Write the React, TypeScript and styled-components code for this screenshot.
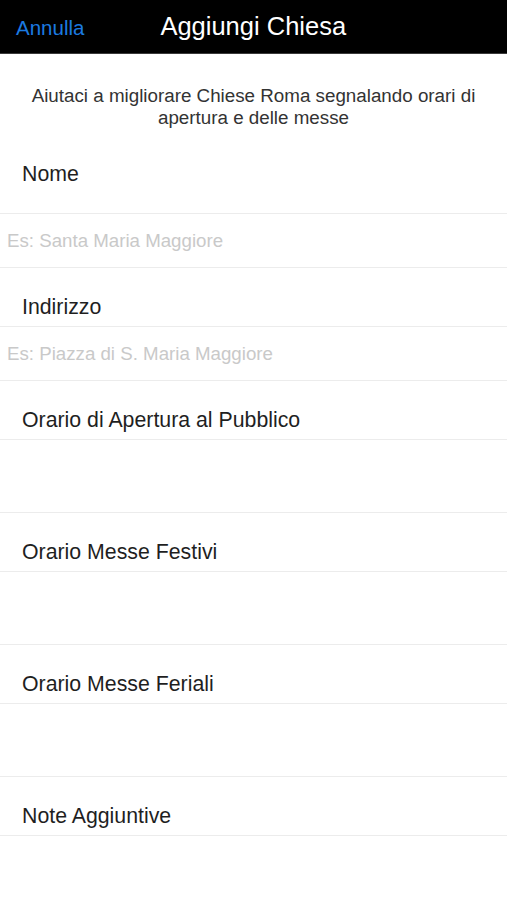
import React from 'react';
import styled, { createGlobalStyle } from 'styled-components';

const GlobalStyle = createGlobalStyle`
  html, body {
    margin: 0;
    padding: 0;
    background: #ffffff;
    font-family: "Liberation Sans", Arial, sans-serif;
  }
`;

const Page = styled.div`
  width: 507px;
  min-height: 900px;
  background: #ffffff;
  overflow: hidden;
`;

const NavBar = styled.div`
  height: 53px;
  background: #000000;
  border-bottom: 1px solid #3a3a3a;
  display: flex;
  align-items: center;
`;

const CancelButton = styled.button`
  background: none;
  border: none;
  padding: 0 0 0 16px;
  margin: 2px 0 0;
  color: #1b7ae0;
  font-family: "Liberation Sans", Arial, sans-serif;
  font-size: 20.5px;
  cursor: pointer;
`;

const Title = styled.h1`
  margin: 0 0 0 76px;
  color: #ffffff;
  font-weight: normal;
  font-size: 25.5px;
  font-family: "Liberation Sans", Arial, sans-serif;
`;

const Intro = styled.p`
  margin: 0;
  padding: 31px 10px 0;
  height: 70px;
  text-align: center;
  color: #333333;
  font-size: 18.8px;
  line-height: 22px;
`;

const LabelRow = styled.div<{ $first?: boolean }>`
  padding: ${p => (p.$first ? '7px 22px 27px' : '27px 22px 7px')};
  line-height: 24px;
  font-size: 21.3px;
  color: #1f1f1f;
  border-bottom: 1px solid #ececec;
`;

const TextInput = styled.input`
  display: block;
  width: 100%;
  box-sizing: border-box;
  height: 54px;
  border: none;
  border-bottom: 1px solid #ececec;
  padding: 0 7px;
  font-family: "Liberation Sans", Arial, sans-serif;
  font-size: 18.7px;
  color: #222;
  outline: none;
  background: #fff;

  &::placeholder {
    color: #c9c9c9;
  }
`;

const TextArea = styled.textarea<{ $last?: boolean }>`
  display: block;
  width: 100%;
  box-sizing: border-box;
  height: ${p => (p.$last ? '65px' : '73px')};
  border: none;
  border-bottom: ${p => (p.$last ? 'none' : '1px solid #ececec')};
  padding: 8px 7px;
  resize: none;
  font-family: "Liberation Sans", Arial, sans-serif;
  font-size: 18px;
  outline: none;
  background: #fff;
`;

const fields = [
  { label: 'Nome', kind: 'input', placeholder: 'Es: Santa Maria Maggiore' },
  { label: 'Indirizzo', kind: 'input', placeholder: 'Es: Piazza di S. Maria Maggiore' },
  { label: 'Orario di Apertura al Pubblico', kind: 'area' },
  { label: 'Orario Messe Festivi', kind: 'area' },
  { label: 'Orario Messe Feriali', kind: 'area' },
  { label: 'Note Aggiuntive', kind: 'area' },
];

export default function App() {
  return (
    <Page>
      <GlobalStyle />
      <NavBar>
        <CancelButton>Annulla</CancelButton>
        <Title>Aggiungi Chiesa</Title>
      </NavBar>
      <Intro>
        Aiutaci a migliorare Chiese Roma segnalando orari di
        <br />
        apertura e delle messe
      </Intro>
      {fields.map((f, i) => (
        <React.Fragment key={i}>
          <LabelRow $first={i === 0}>{f.label}</LabelRow>
          {f.kind === 'input' ? (
            <TextInput placeholder={f.placeholder} />
          ) : (
            <TextArea $last={i === fields.length - 1} />
          )}
        </React.Fragment>
      ))}
    </Page>
  );
}
